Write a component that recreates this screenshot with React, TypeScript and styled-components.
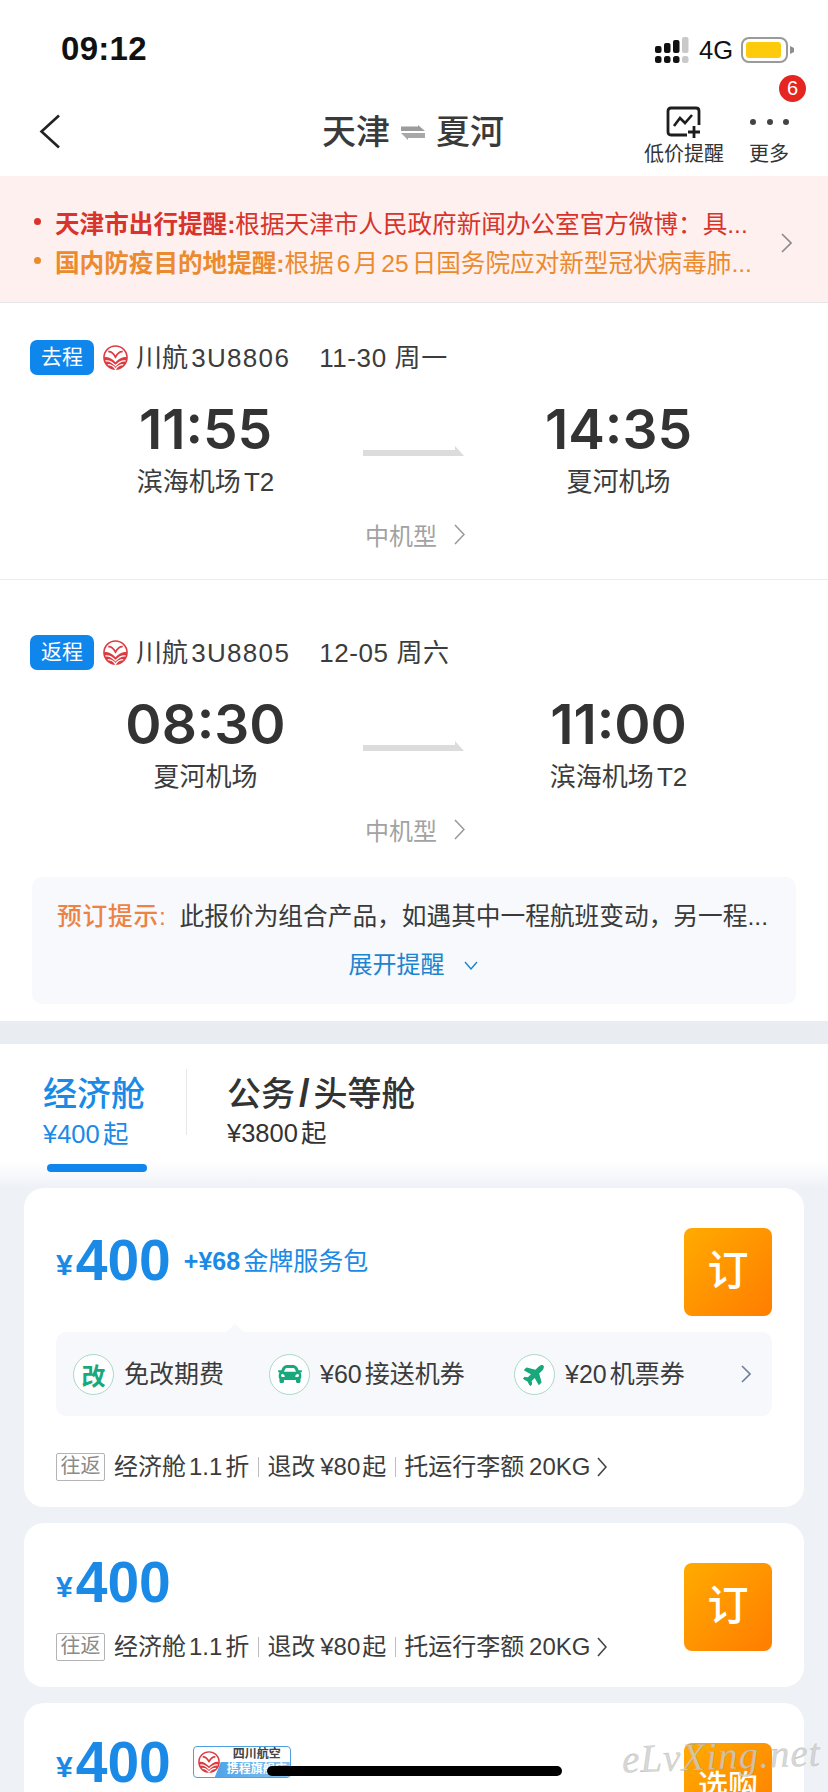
import React from 'react';
import styled, { createGlobalStyle } from 'styled-components';
import { FaCar, FaPlane } from 'react-icons/fa';

const GlobalStyle = createGlobalStyle`
  html, body {
    margin: 0;
    padding: 0;
    background: #fff;
  }
  body {
    font-family: 'Liberation Sans', 'Noto Sans CJK SC', sans-serif;
    color: #333;
    text-autospace: normal;
  }
  * { box-sizing: border-box; }
`;

const Page = styled.div`
  position: relative;
  width: 828px;
  height: 1792px;
  overflow: hidden;
  background: #fff;
`;

/* status bar */
const StatusBar = styled.div`
  height: 88px;
  padding: 27px 33px 0 61px;
  display: flex;
  align-items: flex-start;
  justify-content: space-between;
`;
const Clock = styled.div`
  font-size: 33px;
  line-height: 44px;
  font-weight: 700;
  color: #111;
  letter-spacing: 0.3px;
`;
const StatusRight = styled.div`
  display: flex;
  align-items: center;
  height: 46px;
`;
const Network = styled.span`
  font-size: 25.5px;
  color: #111;
  margin: 0 8px 0 10px;
`;

/* navigation */
const Nav = styled.div`
  height: 88px;
  padding: 0 39px;
  display: grid;
  grid-template-columns: 1fr auto 1fr;
  align-items: start;
`;
const BackButton = styled.div`
  padding-top: 26px;
  display: flex;
`;
const Title = styled.div`
  display: flex;
  align-items: center;
  gap: 10px;
  margin: 20px 2px 0 0;
  font-size: 34px;
  line-height: 48px;
  font-weight: 500;
  color: #3a3a3a;
`;
const NavActions = styled.div`
  display: flex;
  justify-content: flex-end;
  gap: 25px;
  padding-top: 15px;
`;
const NavAction = styled.div`
  position: relative;
  display: flex;
  flex-direction: column;
  align-items: center;
  font-size: 20px;
  line-height: 28px;
  color: #333;
`;
const NavIconSlot = styled.div`
  height: 37px;
  display: flex;
  align-items: center;
`;
const CountBadge = styled.span`
  position: absolute;
  top: -28px;
  right: -17px;
  width: 27px;
  height: 27px;
  border-radius: 50%;
  background: #e5251f;
  color: #fff;
  font-size: 20px;
  line-height: 27px;
  text-align: center;
`;

/* travel notices */
const Banner = styled.div`
  height: 127px;
  padding: 26px 36px 0 34px;
  display: flex;
  align-items: flex-start;
  background: #fdf0ee;
  border-bottom: 1px solid #e6e6e6;
`;
const BannerLines = styled.div`
  flex: 1;
`;
const BannerLine = styled.div<{ $color: string }>`
  display: flex;
  align-items: center;
  height: 39px;
  font-size: 24.6px;
  white-space: nowrap;
  color: ${({ $color }) => $color};
  b { font-weight: 700; }
  &::before {
    content: '';
    width: 7px;
    height: 7px;
    border-radius: 50%;
    margin-right: 14px;
    flex: none;
    background: ${({ $color }) => $color};
  }
`;
const BannerArrow = styled.div`
  padding-top: 31px;
  display: flex;
`;

/* flight legs */
const Leg = styled.section<{ $top: number; $divided?: boolean }>`
  padding: ${({ $top }) => $top}px 0 0;
  border-bottom: ${({ $divided }) => ($divided ? '1px solid #ececec' : 'none')};
  padding-bottom: ${({ $divided }) => ($divided ? '28px' : '0')};
`;
const LegHead = styled.div`
  display: flex;
  align-items: center;
  height: 35px;
  padding: 0 0 4px 30px;
  font-size: 26px;
  color: #3c3c3c;
  white-space: nowrap;
`;
const LegTag = styled.span`
  width: 64px;
  height: 35px;
  align-self: flex-start;
  border-radius: 7px;
  background: #0f86ec;
  color: #fff;
  font-size: 21px;
  line-height: 33px;
  text-align: center;
  margin-right: 9px;
`;
const LogoSlot = styled.span`
  display: flex;
  margin: 4px 8px 0 0;
`;
const FlightNo = styled.span`
  letter-spacing: 1.3px;
`;
const LegDate = styled.span`
  margin-left: 29px;
  letter-spacing: 0.6px;
`;
const Schedule = styled.div`
  display: grid;
  grid-template-columns: 1fr 102px 1fr;
  padding: 24px 54px 0 50px;
  align-items: center;
`;
const Stop = styled.div`
  display: flex;
  flex-direction: column;
  align-items: center;
`;
const StopTime = styled.div`
  font-family: Inter, 'Liberation Sans', sans-serif;
  font-size: 55px;
  line-height: 60px;
  font-weight: 600;
  color: #333;
`;
const StopName = styled.div`
  margin-top: 6px;
  font-size: 26px;
  line-height: 34px;
  color: #3c3c3c;
  white-space: nowrap;
`;
const RouteArrow = styled.div`
  display: flex;
  margin: 4px -2px 0 2px;
  svg { flex: none; }
`;
const PlaneType = styled.div`
  margin-top: 18px;
  padding-left: 365px;
  height: 34px;
  display: flex;
  align-items: center;
  gap: 17px;
  font-size: 24px;
  color: #a2a2a2;
`;

/* booking notice */
const Notice = styled.div`
  margin: 31px 32px 17px;
  height: 127px;
  padding: 22px 25px 0;
  background: #f7f9fc;
  border-radius: 10px;
`;
const NoticeText = styled.div`
  font-size: 24.7px;
  line-height: 36px;
  color: #3a3a3a;
  white-space: nowrap;
  b {
    font-weight: 500;
    color: #ec8345;
    letter-spacing: 0.8px;
    margin-right: 13px;
  }
`;
const NoticeMore = styled.div`
  margin-top: 12px;
  display: flex;
  align-items: center;
  justify-content: center;
  gap: 19px;
  font-size: 24px;
  line-height: 36px;
  color: #1b85cf;
  padding-right: 2px;
`;
const Band = styled.div`
  height: 23px;
  background: #e9ecf0;
`;

/* cabin tabs */
const Tabs = styled.div`
  height: 144px;
  padding: 25px 0 0 43px;
  display: flex;
  align-items: flex-start;
  background: linear-gradient(to bottom, #fff 118px, #eef1f6 144px);
`;
const Tab = styled.div`
  position: relative;
  display: flex;
  flex-direction: column;
`;
const TabName = styled.div<{ $active?: boolean }>`
  height: 50px;
  font-size: 34px;
  line-height: 50px;
  font-weight: 500;
  white-space: nowrap;
  color: ${({ $active }) => ($active ? '#1a8ae6' : '#333')};
`;
const Slash = styled.span`
  font-size: 38px;
  line-height: 1;
  font-weight: 700;
  margin: 0 4px;
`;
const TabPrice = styled.div<{ $active?: boolean }>`
  font-size: 25.5px;
  line-height: 34px;
  margin-top: ${({ $active }) => ($active ? '-2px' : '-3px')};
  color: ${({ $active }) => ($active ? '#1a8ae6' : '#333')};
`;
const TabBar = styled.div`
  width: 100px;
  height: 8px;
  margin: 13px 0 0 4px;
  border-radius: 4px;
  background: #0f86ec;
`;
const TabDivider = styled.div`
  width: 1px;
  height: 66px;
  margin: 0 40px 0 39px;
  background: #e8e8e8;
`;

/* fare cards */
const Fares = styled.div`
  padding: 0 24px;
  background: #eef1f6;
  display: flex;
  flex-direction: column;
  gap: 16px;
`;
const FareCard = styled.div<{ $height: number }>`
  height: ${({ $height }) => $height}px;
  flex: none;
  background: #fff;
  border-radius: 20px;
  padding: 0 32px;
`;
const FareTop = styled.div`
  display: flex;
  align-items: flex-start;
  justify-content: space-between;
  padding-top: 40px;
`;
const PriceRow = styled.div<{ $shift: number }>`
  display: flex;
  align-items: center;
  height: 56px;
  margin-top: ${({ $shift }) => $shift}px;
  color: #1a8ae6;
`;
const Yen = styled.span`
  font-size: 30px;
  font-weight: 700;
  margin: 10px 3px 0 0;
`;
const Amount = styled.span`
  font-size: 57px;
  font-weight: 700;
  line-height: 56px;
`;
const Perk = styled.span`
  margin: 0 0 3px 13px;
  font-size: 25px;
  b { font-weight: 700; }
`;
const BookButton = styled.div<{ $small?: boolean }>`
  width: 88px;
  height: 88px;
  border-radius: 8px;
  background: linear-gradient(135deg, #ffab00, #ff7d00);
  color: #fff;
  font-size: ${({ $small }) => ($small ? '30px' : '41px')};
  font-weight: 500;
  line-height: 86px;
  text-align: center;
  white-space: nowrap;
`;
const BenefitStrip = styled.div`
  position: relative;
  height: 84px;
  margin-top: 16px;
  display: flex;
  align-items: center;
  padding-left: 17px;
  background: #f6f8fc;
  border-radius: 10px;
  font-size: 25px;
  color: #3c3c3c;
  &::before {
    content: '';
    position: absolute;
    top: -8px;
    left: 170px;
    border-left: 9px solid transparent;
    border-right: 9px solid transparent;
    border-bottom: 8px solid #f6f8fc;
  }
`;
const Benefit = styled.div<{ $width: number }>`
  width: ${({ $width }) => $width}px;
  display: flex;
  align-items: center;
  gap: 10px;
  white-space: nowrap;
`;
const BenefitLabel = styled.span`
  margin-bottom: 4px;
`;
const BenefitIcon = styled.span`
  width: 41px;
  height: 41px;
  flex: none;
  border-radius: 50%;
  border: 1px solid #a9d8c8;
  background: #fff;
  color: #17a97c;
  font-size: 24px;
  font-weight: 700;
  display: flex;
  align-items: center;
  justify-content: center;
`;
const StripArrow = styled.span`
  display: flex;
`;
const MetaRow = styled.div<{ $top: number }>`
  margin-top: ${({ $top }) => $top}px;
  height: 28px;
  display: flex;
  align-items: center;
  font-size: 24px;
  color: #3c3c3c;
  white-space: nowrap;
`;
const MetaTag = styled.span`
  width: 49px;
  height: 28px;
  border: 1px solid #b4b4b4;
  border-radius: 2px;
  color: #8a8a8a;
  font-size: 20px;
  line-height: 24px;
  text-align: center;
  margin-right: 9px;
`;
const MetaText = styled.span`
  margin-bottom: 5px;
`;
const MetaSep = styled.span`
  width: 1px;
  height: 20px;
  background: #bdbdbd;
  margin: 0 8px 0 9px;
`;
const MetaArrow = styled.span`
  display: flex;
  margin-left: 7px;
`;
const CarrierBadge = styled.div`
  width: 98px;
  height: 32px;
  margin-left: 22px;
  border: 1px solid #4ea0e0;
  border-radius: 4px;
  display: grid;
  grid-template-columns: 30px 1fr;
  overflow: hidden;
  background: #fff;
`;
const CarrierLogo = styled.span`
  display: flex;
  align-items: center;
  justify-content: center;
`;
const CarrierText = styled.div`
  display: flex;
  flex-direction: column;
  font-size: 12px;
  line-height: 15px;
  font-weight: 700;
  text-align: center;
  color: #444;
  white-space: nowrap;
`;
const CarrierStore = styled.span`
  margin-left: -9px;
  padding-left: 9px;
  background: linear-gradient(to right, #4fa3e8, #86c3f3);
  color: #fff;
  clip-path: polygon(6px 0, 100% 0, 100% 100%, 0 100%);
`;

/* overlays at the foot of the screen */
const HomeIndicator = styled.div`
  position: absolute;
  left: 267px;
  top: 1766px;
  width: 295px;
  height: 10px;
  border-radius: 5px;
  background: #000;
`;
const Watermark = styled.div`
  position: absolute;
  left: 622px;
  top: 1733px;
  font-family: 'Liberation Serif', serif;
  font-style: italic;
  font-size: 39px;
  line-height: 46px;
  letter-spacing: 1px;
  color: rgba(205, 205, 205, 0.8);
  -webkit-text-stroke: 0.3px rgba(130, 130, 130, 0.5);
  transform: rotate(-2deg);
  white-space: nowrap;
`;

const Chevron = ({ w, h, color, stroke = 1.6 }: { w: number; h: number; color: string; stroke?: number }) => (
  <svg width={w} height={h} viewBox={`0 0 ${w} ${h}`} fill="none">
    <path d={`M1 1 L${w - 1} ${h / 2} L1 ${h - 1}`} stroke={color} strokeWidth={stroke} />
  </svg>
);

// Sichuan Airlines roundel: swallow on white above a striped red lower half
const AirlineLogo = ({ size }: { size: number }) => (
  <svg width={size} height={size} viewBox="0 0 26 26">
    <circle cx="13" cy="13" r="12" fill="#fff" stroke="#dc3b40" strokeWidth="1.6" />
    <path d="M1 13 C5 11.500 9 14 13 18 C17 14 21 11.500 25 13 A12 12 0 0 1 1 13Z" fill="#dc3b40" />
    <path d="M5.500 7 C9 6.500 11 9 13 12.500 C15 9 17 6.500 20.500 7" stroke="#dc3b40" strokeWidth="1.800" fill="none" />
    <path
      d="M2.500 16.500 C6 16 10 18 13 21.500 C16 18 20 16 23.500 16.500 M5 20.500 C8 20.500 11 22 13 25 C15 22 18 20.500 21 20.500"
      stroke="#fff"
      strokeWidth="1.300"
      fill="none"
    />
  </svg>
);

const SignalIcon = () => (
  <svg width="34" height="26" viewBox="0 0 34 26">
    <g fill="#111">
      <rect x="0" y="9" width="6.500" height="7" rx="2" />
      <rect x="9" y="6" width="6.500" height="10" rx="2" />
      <rect x="18" y="3" width="6.500" height="13" rx="2" />
      <rect x="0" y="19" width="6.500" height="7" rx="2.500" />
      <rect x="9" y="19" width="6.500" height="7" rx="2.500" />
      <rect x="18" y="19" width="6.500" height="7" rx="2.500" />
    </g>
    <g fill="#c9c9c9">
      <rect x="27" y="0" width="6.500" height="16" rx="2" />
      <rect x="27" y="19" width="6.500" height="7" rx="2.500" />
    </g>
  </svg>
);

const BatteryIcon = () => (
  <svg width="54" height="26" viewBox="0 0 54 26">
    <rect x="1" y="1" width="45" height="24" rx="7" fill="#fff" stroke="#9a9a9a" strokeWidth="2" />
    <rect x="5" y="5" width="35" height="16" rx="3" fill="#fdcb0b" />
    <path d="M49 9 L53 11 V15 L49 17Z" fill="#8e8e8e" />
  </svg>
);

const RouteLine = () => (
  <svg width="102" height="11" viewBox="0 0 102 11">
    <path d="M0 4 H92 V0 L101 10 H0Z" fill="#dcdcdc" />
  </svg>
);

const FlightLeg = ({ tag, airline, flightNo, date, dep, depAt, arr, arrAt, top, divided }: {
  tag: string; airline: string; flightNo: string; date: string; dep: string; depAt: string;
  arr: string; arrAt: string; top: number; divided?: boolean;
}) => (
  <Leg $top={top} $divided={divided}>
    <LegHead>
      <LegTag>{tag}</LegTag>
      <LogoSlot><AirlineLogo size={25} /></LogoSlot>
      <span>{airline}<FlightNo>{flightNo}</FlightNo></span>
      <LegDate>{date}</LegDate>
    </LegHead>
    <Schedule>
      <Stop>
        <StopTime>{dep}</StopTime>
        <StopName>{depAt}</StopName>
      </Stop>
      <RouteArrow><RouteLine /></RouteArrow>
      <Stop>
        <StopTime>{arr}</StopTime>
        <StopName>{arrAt}</StopName>
      </Stop>
    </Schedule>
    <PlaneType>
      中机型
      <Chevron w={11} h={21} color="#9a9a9a" />
    </PlaneType>
  </Leg>
);

const FareMeta = ({ top }: { top: number }) => (
  <MetaRow $top={top}>
    <MetaTag>往返</MetaTag>
    <MetaText>经济舱1.1折</MetaText>
    <MetaSep />
    <MetaText>退改{'\u2009'}¥80{'\u200a'}起</MetaText>
    <MetaSep />
    <MetaText>托运行李额{'\u2009'}20KG</MetaText>
    <MetaArrow><Chevron w={10} h={20} color="#444" /></MetaArrow>
  </MetaRow>
);

const Price = () => (
  <>
    <Yen>¥</Yen>
    <Amount>400</Amount>
  </>
);

export default function App() {
  return (
    <Page>
      <GlobalStyle />
      <StatusBar>
        <Clock>09:12</Clock>
        <StatusRight>
          <SignalIcon />
          <Network>4G</Network>
          <BatteryIcon />
        </StatusRight>
      </StatusBar>

      <Nav>
        <BackButton>
          <svg width="22" height="35" viewBox="0 0 22 35" fill="none">
            <path d="M20 1.500 L2.500 17.500 L20 33.500" stroke="#222" strokeWidth="2.600" />
          </svg>
        </BackButton>
        <Title>
          天津
          <svg width="26" height="15" viewBox="0 0 26 15">
            <path d="M1 1.500 H18 V0 L25 6 H1 Z" fill="#9c9c9c" />
            <path d="M25 13 H8 V15 L1 8 H25 Z" fill="#a8a8a8" />
          </svg>
          夏河
        </Title>
        <NavActions>
          <NavAction>
            <NavIconSlot>
              <svg width="36" height="32" viewBox="0 0 36 32" fill="none">
                <path d="M21 29 H5 Q2 29 2 26 V5 Q2 2 5 2 H30 Q33 2 33 5 V19" stroke="#1d1d1d" strokeWidth="2.800" />
                <path d="M8 20 L14 12 L19 17 L26 9" stroke="#1d1d1d" strokeWidth="2.600" />
                <path d="M28 20 V32 M22 26 H34" stroke="#1d1d1d" strokeWidth="2.800" />
              </svg>
            </NavIconSlot>
            低价提醒
          </NavAction>
          <NavAction>
            <CountBadge>6</CountBadge>
            <NavIconSlot>
              <svg width="40" height="8" viewBox="0 0 40 8">
                <circle cx="4" cy="4" r="3" fill="#444" />
                <circle cx="21" cy="4" r="3" fill="#444" />
                <circle cx="37" cy="4" r="3" fill="#444" />
              </svg>
            </NavIconSlot>
            更多
          </NavAction>
        </NavActions>
      </Nav>

      <Banner>
        <BannerLines>
          <BannerLine $color="#d8342c">
            <span><b>天津市出行提醒:</b>根据天津市人民政府新闻办公室官方微博：具...</span>
          </BannerLine>
          <BannerLine $color="#ec8a2e">
            <span><b>国内防疫目的地提醒:</b>根据6月25日国务院应对新型冠状病毒肺...</span>
          </BannerLine>
        </BannerLines>
        <BannerArrow><Chevron w={11} h={20} color="#8a8a8a" /></BannerArrow>
      </Banner>

      <FlightLeg
        top={37}
        divided
        tag="去程"
        airline="川航"
        flightNo="3U8806"
        date="11-30 周一"
        dep="11:55"
        depAt="滨海机场T2"
        arr="14:35"
        arrAt="夏河机场"
      />
      <FlightLeg
        top={55}
        tag="返程"
        airline="川航"
        flightNo="3U8805"
        date="12-05 周六"
        dep="08:30"
        depAt="夏河机场"
        arr="11:00"
        arrAt="滨海机场T2"
      />

      <Notice>
        <NoticeText><b>预订提示:</b>此报价为组合产品，如遇其中一程航班变动，另一程...</NoticeText>
        <NoticeMore>
          展开提醒
          <svg width="14" height="9" viewBox="0 0 14 9" fill="none">
            <path d="M1 1 L7 8 L13 1" stroke="#1b85cf" strokeWidth="1.400" />
          </svg>
        </NoticeMore>
      </Notice>
      <Band />

      <Tabs>
        <Tab>
          <TabName $active>经济舱</TabName>
          <TabPrice $active>¥400起</TabPrice>
          <TabBar />
        </Tab>
        <TabDivider />
        <Tab>
          <TabName>公务<Slash>/</Slash>头等舱</TabName>
          <TabPrice>¥3800起</TabPrice>
        </Tab>
      </Tabs>

      <Fares>
        <FareCard $height={319}>
          <FareTop>
            <PriceRow $shift={4}>
              <Price />
              <Perk><b>+¥68</b>金牌服务包</Perk>
            </PriceRow>
            <BookButton>订</BookButton>
          </FareTop>
          <BenefitStrip>
            <Benefit $width={196}>
              <BenefitIcon>改</BenefitIcon>
              <BenefitLabel>免改期费</BenefitLabel>
            </Benefit>
            <Benefit $width={245}>
              <BenefitIcon><FaCar size={24} /></BenefitIcon>
              <BenefitLabel>¥60接送机券</BenefitLabel>
            </Benefit>
            <Benefit $width={227}>
              <BenefitIcon><FaPlane size={24} style={{ transform: 'rotate(-45deg)' }} /></BenefitIcon>
              <BenefitLabel>¥20机票券</BenefitLabel>
            </Benefit>
            <StripArrow><Chevron w={10} h={18} color="#6f7f96" /></StripArrow>
          </BenefitStrip>
          <FareMeta top={37} />
        </FareCard>

        <FareCard $height={164}>
          <FareTop>
            <div>
              <PriceRow $shift={-9}>
                <Price />
              </PriceRow>
              <FareMeta top={23} />
            </div>
            <BookButton>订</BookButton>
          </FareTop>
        </FareCard>

        <FareCard $height={180}>
          <FareTop>
            <PriceRow $shift={-9}>
              <Price />
              <CarrierBadge>
                <CarrierLogo><AirlineLogo size={22} /></CarrierLogo>
                <CarrierText>
                  <span>四川航空</span>
                  <CarrierStore>携程旗舰店</CarrierStore>
                </CarrierText>
              </CarrierBadge>
            </PriceRow>
            <BookButton $small>选购</BookButton>
          </FareTop>
        </FareCard>
      </Fares>

      <Watermark>eLvXing.net</Watermark>
      <HomeIndicator />
    </Page>
  );
}
